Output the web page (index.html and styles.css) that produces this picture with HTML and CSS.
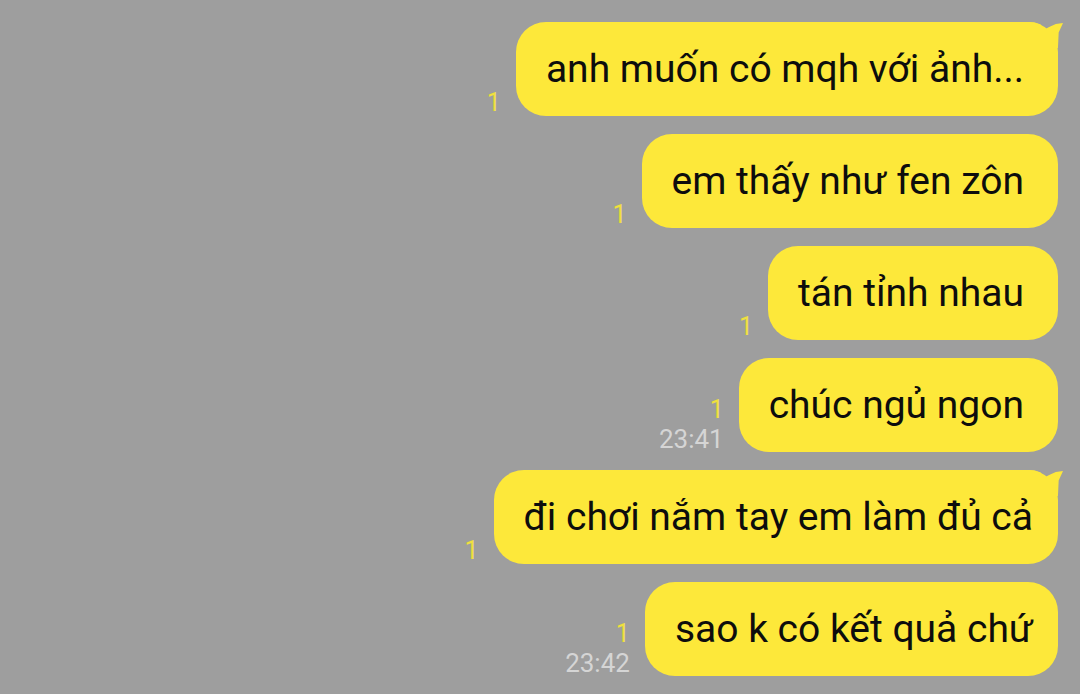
FILE: index.html
```html
<!DOCTYPE html>
<html lang="vi">
<head>
<meta charset="utf-8">
<title>Chat</title>
<link rel="stylesheet" href="styles.css">
</head>
<body>
<div class="chat">
  <div class="row">
    <div class="meta"><span class="unread">1</span></div>
    <div class="bubble tail">anh muốn có mqh với ảnh...</div>
  </div>
  <div class="row">
    <div class="meta"><span class="unread">1</span></div>
    <div class="bubble">em thấy như fen zôn</div>
  </div>
  <div class="row">
    <div class="meta"><span class="unread">1</span></div>
    <div class="bubble">tán tỉnh nhau</div>
  </div>
  <div class="row">
    <div class="meta"><span class="unread">1</span><span class="time">23:41</span></div>
    <div class="bubble">chúc ngủ ngon</div>
  </div>
  <div class="row">
    <div class="meta"><span class="unread">1</span></div>
    <div class="bubble tail tight">đi chơi nắm tay em làm đủ cả</div>
  </div>
  <div class="row">
    <div class="meta"><span class="unread">1</span><span class="time">23:42</span></div>
    <div class="bubble tight">sao k có kết quả chứ</div>
  </div>
</div>
</body>
</html>
```

FILE: styles.css
```css
html, body {
  margin: 0;
  padding: 0;
  background: #9e9e9e;
  width: 1080px;
  height: 694px;
  overflow: hidden;
  font-family: Roboto, "Noto Sans", sans-serif;
}

.chat {
  display: flex;
  flex-direction: column;
  gap: 18px;
  padding: 22px 22px 0 0;
}

.row {
  display: flex;
  justify-content: flex-end;
  align-items: flex-end;
  gap: 15px;
}

.meta {
  display: flex;
  flex-direction: column;
  align-items: flex-end;
  gap: 3px;
}

.unread {
  font-size: 25px;
  line-height: 27px;
  color: #efe03e;
}

.time {
  font-size: 26px;
  line-height: 26px;
  color: #d5d5d5;
}

.bubble {
  position: relative;
  background: #fde83a;
  color: #0d0d0d;
  font-size: 39px;
  line-height: 42px;
  height: 94px;
  box-sizing: border-box;
  padding: 26px 34px 26px 30px;
  border-radius: 30px;
  white-space: nowrap;
}

.bubble.tight {
  padding-right: 25px;
}

.bubble.tail::after {
  content: "";
  position: absolute;
  top: 0;
  right: -5px;
  width: 36px;
  height: 26px;
  background: #fde83a;
  clip-path: polygon(0 0, 6% 0, 22% 2%, 38% 10%, 48% 30%, 60% 20%, 80% 8%, 100% 4%, 88% 40%, 86% 100%, 0 100%);
}
```
